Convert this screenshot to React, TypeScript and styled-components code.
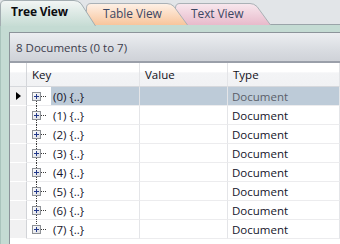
import React from "react";
import styled, { createGlobalStyle } from "styled-components";

const Global = createGlobalStyle`
  html, body {
    margin: 0;
    padding: 0;
    width: 340px;
    height: 244px;
    overflow: hidden;
    background: #e2e5e8;
    font-family: "Open Sans", "Noto Sans", sans-serif;
  }
`;

const Screen = styled.div`
  width: 340px;
  height: 244px;
  display: flex;
  flex-direction: column;
  overflow: hidden;
`;

const TabStrip = styled.div`
  height: 25px;
  display: flex;
  align-items: flex-end;
  position: relative;
  border-bottom: 1px solid #9aa4a9;
  box-sizing: border-box;
`;

interface TabProps {
  w: number;
  top: number;
  z: number;
  pad: number;
  active?: boolean;
  overlap: number;
}

const Tab = styled.div<TabProps>`
  position: relative;
  flex: none;
  width: ${(p) => p.w}px;
  height: ${(p) => (p.active ? 26 - p.top : 25 - p.top)}px;
  margin-left: ${(p) => -p.overlap}px;
  margin-bottom: -1px;
  z-index: ${(p) => p.z};
  display: flex;
  align-items: center;
  padding-left: ${(p) => p.pad}px;
  padding-bottom: ${(p) => (p.active ? 3 : 1)}px;
  box-sizing: border-box;
  font-size: 12px;
  font-weight: ${(p) => (p.active ? 700 : 400)};
  color: ${(p) => (p.active ? "#0c0c10" : "#3d4763")};
  letter-spacing: ${(p) => (p.active ? "-0.2px" : "-0.1px")};
  cursor: default;
`;

const TabShape = styled.svg`
  position: absolute;
  left: 0;
  top: 0;
  z-index: -1;
  overflow: visible;
`;

const TabLabel = styled.span`
  position: relative;
`;

const Frame = styled.div`
  flex: 1;
  background: #c4dbd3;
  padding: 7px 0 0 8px;
  display: flex;
  border-left: 1px solid #a9c4bc;
`;

const Panel = styled.div`
  flex: 1;
  background: #ffffff;
  border-top: 1px solid #8c949a;
  border-left: 1px solid #8c949a;
  display: flex;
  flex-direction: column;
`;

const Summary = styled.div`
  height: 28px;
  border-bottom: 2px solid #9a9fa9;
  background: linear-gradient(#eceef1, #d9dce1 60%, #cfd2d8);
  display: flex;
  align-items: center;
  padding-left: 6px;
  font-size: 11.5px;
  color: #3c3c4c;
`;

const Grid = styled.div`
  display: flex;
  flex-direction: column;
  background: #fff;
`;

const Row = styled.div`
  display: grid;
  grid-template-columns: 17px 113px 88px 1fr;
  height: 19px;
`;

const HeadRow = styled(Row)`
  height: 24px;
`;

const HeadCell = styled.div`
  display: flex;
  align-items: center;
  padding-left: 5px;
  font-size: 11.5px;
  color: #101020;
  background: linear-gradient(#ffffff 40%, #f3f4f6 42%, #f1f2f4);
  border-right: 1px solid #e4e5e8;
  border-bottom: 1px solid #d6d8dc;
`;

const Corner = styled.div`
  background: linear-gradient(#ffffff 40%, #f3f4f6 42%, #f1f2f4);
  border-right: 1px solid #d4d6da;
  border-bottom: 1px solid #d6d8dc;
`;

const RowHead = styled.div`
  background: #f1f1f2;
  border-right: 1px solid #d2d4d8;
  border-bottom: 1px solid #ffffff;
  display: flex;
  align-items: center;
  padding-left: 6px;
`;

const Arrow = styled.span`
  width: 0;
  height: 0;
  border-top: 4px solid transparent;
  border-bottom: 4px solid transparent;
  border-left: 5px solid #000;
`;

interface SelProps {
  sel?: boolean;
}

const KeyCell = styled.div`
  display: flex;
  align-items: stretch;
  border-bottom: 1px solid #ececee;
  border-right: 1px solid #e4e5e8;
`;

interface GutterProps {
  first?: boolean;
  last?: boolean;
}

const Gutter = styled.div<GutterProps>`
  position: relative;
  width: 19px;
  margin-left: 5px;
  flex: none;
  &::before {
    content: "";
    position: absolute;
    left: 4px;
    top: ${(p) => (p.first ? "9px" : "-1px")};
    bottom: ${(p) => (p.last ? "10px" : "-1px")};
    border-left: 1px dotted #3a3a3a;
  }
  &::after {
    content: "";
    position: absolute;
    left: 9px;
    width: 5px;
    top: 9px;
    border-top: 1px dotted #3a3a3a;
  }
`;

const Expander = styled.svg`
  position: absolute;
  left: 0;
  top: 5px;
  z-index: 1;
`;

const KeyText = styled.div<SelProps>`
  flex: 1;
  display: flex;
  align-items: center;
  padding-left: 2px;
  font-size: 11.5px;
  color: #14142a;
  background: ${(p) => (p.sel ? "#bdcbd8" : "transparent")};
`;

const Cell = styled.div<SelProps>`
  display: flex;
  align-items: center;
  padding-left: 4px;
  font-size: 11.5px;
  color: ${(p) => (p.sel ? "#5a5f6a" : "#14142a")};
  background: ${(p) => (p.sel ? "#bdcbd8" : "transparent")};
  border-bottom: 1px solid #ececee;
  border-right: 1px solid #e4e5e8;
`;

const tabPath = (w: number, h: number, slant: number) =>
  `M0.5,${h} V5 Q0.5,0.5 5,0.5 H${w - slant - 4} Q${w - slant},0.5 ${
    w - slant + 3
  },3.5 L${w - 0.5},${h}`;

const tabs = [
  { label: "Table View", w: 102, top: 3, z: 2, pad: 17, overlap: 10, c1: "#fef1e7", c2: "#f8c59c" },
  { label: "Text View", w: 96, top: 3, z: 1, pad: 16, overlap: 13, c1: "#f8e8ee", c2: "#e8bacb" },
];

const PlusBox = () => (
  <Expander width="9" height="9" viewBox="0 0 9 9">
    <defs>
      <linearGradient id="pb" x1="0" y1="0" x2="1" y2="1">
        <stop offset="0" stopColor="#ffffff" />
        <stop offset="1" stopColor="#d9dbe0" />
      </linearGradient>
    </defs>
    <rect x="0.5" y="0.5" width="8" height="8" fill="url(#pb)" stroke="#8e9196" />
    <path d="M2,4.5 H7 M4.5,2 V7" stroke="#23398a" strokeWidth="1" />
  </Expander>
);

const App = () => {
  const rows = [0, 1, 2, 3, 4, 5, 6, 7];
  return (
    <Screen>
      <Global />
      <TabStrip>
        <Tab w={96} top={1} z={3} pad={11} overlap={0} active>
          <TabShape width={96} height={26}>
            <defs>
              <linearGradient id="tv" x1="0" y1="0" x2="0" y2="1">
                <stop offset="0" stopColor="#f3f6f5" />
                <stop offset="1" stopColor="#c6dcd4" />
              </linearGradient>
            </defs>
            <path d={tabPath(96, 26, 18) + " Z"} fill="url(#tv)" />
            <path d={tabPath(96, 26, 18)} fill="none" stroke="#a3adb1" />
          </TabShape>
          <TabLabel>Tree View</TabLabel>
        </Tab>
        {tabs.map((t, i) => (
          <Tab key={t.label} w={t.w} top={t.top} z={t.z} pad={t.pad} overlap={t.overlap}>
            <TabShape width={t.w} height={22}>
              <defs>
                <linearGradient id={"tg" + i} x1="0" y1="0" x2="0" y2="1">
                  <stop offset="0" stopColor={t.c1} />
                  <stop offset="1" stopColor={t.c2} />
                </linearGradient>
              </defs>
              <path d={tabPath(t.w, 22, 17) + " Z"} fill={`url(#tg${i})`} />
              <path d={tabPath(t.w, 22, 17)} fill="none" stroke="#aab1b6" />
            </TabShape>
            <TabLabel>{t.label}</TabLabel>
          </Tab>
        ))}
      </TabStrip>
      <Frame>
        <Panel>
          <Summary>8 Documents (0 to 7)</Summary>
          <Grid>
            <HeadRow>
              <Corner />
              <HeadCell>Key</HeadCell>
              <HeadCell>Value</HeadCell>
              <HeadCell>Type</HeadCell>
            </HeadRow>
            {rows.map((n) => (
              <Row key={n}>
                <RowHead>{n === 0 && <Arrow />}</RowHead>
                <KeyCell>
                  <Gutter first={n === 0} last={n === rows.length - 1}>
                    <PlusBox />
                  </Gutter>
                  <KeyText sel={n === 0}>({n}) {"{..}"}</KeyText>
                </KeyCell>
                <Cell sel={n === 0} />
                <Cell sel={n === 0}>Document</Cell>
              </Row>
            ))}
          </Grid>
        </Panel>
      </Frame>
    </Screen>
  );
};

export default App;
